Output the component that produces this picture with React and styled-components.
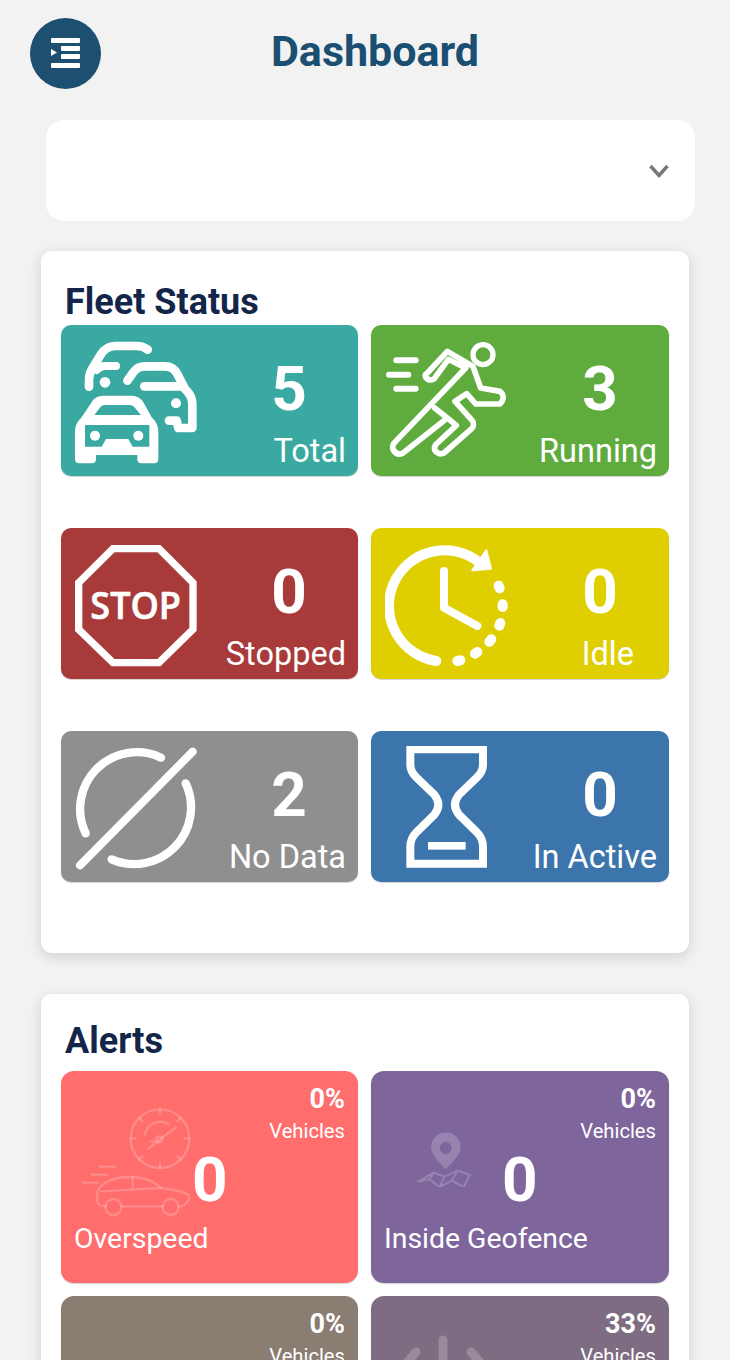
import React from 'react';
import styled, { createGlobalStyle } from 'styled-components';

const Global = createGlobalStyle`
  html, body {
    margin: 0;
    height: 1360px;
    overflow: hidden;
    background: #f2f2f2;
    font-family: Roboto, "Liberation Sans", sans-serif;
  }
`;

const Page = styled.div`
  width: 730px;
  height: 1360px;
  overflow: hidden;
  padding-top: 18px;
  box-sizing: border-box;
`;

const Header = styled.header`
  display: grid;
  grid-template-columns: 101px 1fr 81px;
  align-items: start;
`;

const MenuButton = styled.button`
  width: 71px;
  height: 71px;
  margin-left: 30px;
  padding: 0;
  border: 0;
  border-radius: 50%;
  background: #1c4f70;
  display: flex;
  align-items: center;
  justify-content: center;
`;

const Title = styled.h1`
  margin: 8px 0 0;
  text-align: center;
  color: #1b4f72;
  font-size: 43px;
  line-height: 50px;
  font-weight: 700;
`;

const Select = styled.div`
  width: 649px;
  height: 101px;
  margin: 31px 0 0 46px;
  padding-right: 26px;
  box-sizing: border-box;
  background: #fff;
  border-radius: 18px;
  display: flex;
  align-items: center;
  justify-content: flex-end;
`;

const Card = styled.section`
  width: 648px;
  margin: ${p => p.$top}px 0 0 41px;
  padding: ${p => p.$pad};
  box-sizing: border-box;
  background: #fff;
  border-radius: 11px;
  box-shadow: 0 4px 14px rgba(0, 0, 0, 0.14);
`;

const Heading = styled.h2`
  margin: 0 0 ${p => p.$below || 0}px 4px;
  color: #13264a;
  font-size: 36px;
  line-height: 45px;
  font-weight: 700;
`;

const Grid = styled.div`
  display: grid;
  grid-template-columns: 297px 298px;
  column-gap: 13px;
  row-gap: ${p => p.$gap}px;
`;

const StatusTile = styled.div`
  height: 151px;
  padding: 15px 12px 0 14px;
  box-sizing: border-box;
  background: ${p => p.$bg};
  border-radius: 10px;
  box-shadow: 0 1px 1px rgba(0, 0, 0, 0.18);
  display: flex;
  justify-content: space-between;
  color: #fff;
`;

const StatusText = styled.div`
  display: flex;
  flex-direction: column;
  align-items: flex-end;
`;

const StatusCount = styled.div`
  width: 114px;
  margin-top: 13px;
  text-align: center;
  font-size: 62px;
  line-height: 72px;
  font-weight: 700;
`;

const StatusLabel = styled.div`
  margin: 3px ${p => p.$inset || 0}px 0 0;
  font-size: 32.5px;
  line-height: 46px;
  white-space: nowrap;
`;

const AlertTile = styled.div`
  height: 212px;
  padding: 12px 13px 0;
  box-sizing: border-box;
  background: ${p => p.$bg};
  border-radius: 13px;
  box-shadow: 0 1px 1px rgba(0, 0, 0, 0.18);
  color: #fff;
  display: grid;
  grid-template-columns: 119px 1fr;
  grid-template-rows: 62px 70px auto;
`;

const AlertIcon = styled.div`
  grid-column: 1;
  grid-row: 1 / 3;
  align-self: end;
  justify-self: end;
  display: flex;
  margin-bottom: ${p => p.$lift}px;
  margin-right: ${p => p.$shift}px;
`;

const AlertStat = styled.div`
  grid-column: 2;
  grid-row: 1;
  text-align: right;
`;

const Percent = styled.div`
  font-size: 27px;
  line-height: 32px;
  font-weight: 700;
`;

const Vehicles = styled.div`
  margin-top: 1px;
  font-size: 20.2px;
  line-height: 30px;
`;

const AlertCount = styled.div`
  grid-column: 2;
  grid-row: 2;
  align-self: end;
  margin-left: -1px;
  font-size: 62px;
  line-height: 70px;
  font-weight: 700;
`;

const AlertLabel = styled.div`
  grid-column: 1 / 3;
  grid-row: 3;
  margin-top: 4px;
  font-size: 28.4px;
  line-height: 40px;
  white-space: nowrap;
`;

const Glyph = styled.svg`
  display: block;
  flex: none;
`;

const MenuIcon = () => (
  <Glyph width="30" height="31" viewBox="0 0 30 31" fill="#fff">
    <rect x="0" y="0" width="29" height="5" rx="1" />
    <rect x="10" y="8" width="19" height="5" rx="1" />
    <path d="M0 11 L6 14.5 L0 18 Z" />
    <rect x="10" y="16" width="19" height="5" rx="1" />
    <rect x="0" y="25" width="29" height="5" rx="1" />
  </Glyph>
);

const Chevron = () => (
  <Glyph width="20" height="14" viewBox="0 0 20 14" fill="none" stroke="#777" strokeWidth="3.4">
    <path d="M1.5 2 L10 11.5 L18.5 2" />
  </Glyph>
);

const IconFrame = ({ box, children, ...rest }) => (
  <Glyph width="124" height="124" viewBox={box} fill="none" stroke="#fff" strokeLinecap="round" strokeLinejoin="round" {...rest}>
    {children}
  </Glyph>
);

const CarsIcon = () => (
  <IconFrame box="75 58 372 372">
    <path strokeWidth="26" d="M293 87 Q280 76 262 76 L195 76 Q168 76 152 102 L126 145 Q117 160 117 178 L117 198" />
    <path strokeWidth="24" d="M198 136 L165 136 Q150 136 140 148" />
    <circle cx="165" cy="185" r="16" fill="#fff" stroke="none" />
    <path strokeWidth="26" d="M232 180 L250 155 Q262 137 285 137 L345 137 Q370 137 382 160 L405 205 Q427 225 427 250 L427 322 L385 322 L380 300 L357 300" />
    <path strokeWidth="26" d="M283 197 L400 197" />
    <circle cx="378" cy="248" r="15" fill="#fff" stroke="none" />
    <path
      fill="#fff"
      stroke="none"
      fillRule="evenodd"
      d="M75 330 Q75 310 95 290 L125 245 Q135 225 160 225 L245 225 Q268 225 280 245 L305 290 Q325 310 325 330 L325 415 Q325 428 312 428 L275 428 Q262 428 262 415 L262 403 L138 403 L138 415 Q138 428 125 428 L88 428 Q75 428 75 415 Z M133 283 L273 283 L252 258 Q248 253 238 253 L165 253 Q155 253 152 258 Z M105 313 L105 378 L155 378 L168 355 L235 355 L248 378 L298 378 L298 313 Z"
    />
    <circle cx="135" cy="345" r="15" fill="#fff" stroke="none" />
    <circle cx="265" cy="345" r="15" fill="#fff" stroke="none" />
  </IconFrame>
);

const RunnerIcon = () => (
  <IconFrame box="58 66 372 372">
    <path strokeWidth="18" d="M92 127 L150 127 M70 170 L128 170 M92 212 L150 212" />
    <circle cx="352" cy="110" r="30" strokeWidth="16" />
    <path
      strokeWidth="17"
      d="M185 165 L245 100 L322 145 L345 210 L403 220 Q422 236 403 258 L330 258 L303 227 L268 250 L320 308 Q328 322 318 332 L235 405 Q220 412 208 398 Q203 388 212 378 L272 322 L245 300 L112 405 Q95 415 82 395 Q78 380 90 370 L300 150 L248 124 L205 183 Q190 190 180 178 Q175 170 185 165 Z M207 270 L245 300"
    />
  </IconFrame>
);

const StopIcon = () => (
  <IconFrame box="75 66 372 372">
    <path strokeWidth="22" strokeLinejoin="miter" d="M189 83 L327 83 L429 185 L429 325 L327 425 L189 425 L86 325 L86 185 Z" />
    <text
      x="257"
      y="293"
      fill="#fff"
      stroke="#fff"
      strokeWidth="2"
      textAnchor="middle"
      textLength="272"
      lengthAdjust="spacingAndGlyphs"
      fontFamily="'Open Sans', sans-serif"
      fontWeight="600"
      fontSize="116"
    >
      STOP
    </text>
  </IconFrame>
);

const ClockIcon = () => (
  <IconFrame box="58 66 372 372">
    <path strokeWidth="30" strokeLinecap="round" d="M212 420 A167 167 0 1 1 338 122" />
    <path fill="#fff" stroke="#fff" strokeWidth="6" d="M362 88 L376 143 L320 148 Z" />
    <path strokeWidth="24" d="M235 150 L235 260 L335 315" />
    <path strokeWidth="30" d="M399 194 L402 202 M411 250 L411 258 M404 306 L401 314 M377 355 L371 362 M335 393 L328 398 M284 418 L275 420" />
  </IconFrame>
);

const NoDataIcon = () => (
  <IconFrame box="75 60 372 372">
    <path strokeWidth="25" d="M333 95 A170 170 0 0 0 107 322" />
    <path strokeWidth="25" d="M407 172 A170 170 0 0 1 185 400" />
    <path strokeWidth="24" d="M90 418 L428 77" />
  </IconFrame>
);

const HourglassIcon = () => (
  <IconFrame box="58 66 372 372">
    <path
      strokeWidth="24"
      strokeLinejoin="miter"
      d="M134 76 L352 76 L352 122 Q352 142 334 160 L280 212 Q256 243 280 272 L334 325 Q352 343 352 368 L352 419 L134 419 L134 368 Q134 343 152 325 L206 272 Q230 243 206 212 L152 160 Q134 142 134 122 Z"
    />
    <rect x="187" y="354" width="113" height="23" fill="#fff" stroke="none" />
  </IconFrame>
);

const OverspeedIcon = () => (
  <Glyph width="112" height="112" viewBox="90 132 336 336" fill="none" stroke="#fff" strokeOpacity="0.2" strokeWidth="7" strokeLinecap="round" strokeLinejoin="round">
    <circle cx="327" cy="230" r="88" />
    <path d="M327 142 L327 156 M327 304 L327 318 M239 230 L253 230 M401 230 L415 230 M265 168 L275 178 M389 168 L379 178 M265 292 L275 282 M389 292 L379 282" />
    <path d="M281 218 A48 48 0 0 1 352 186" />
    <path d="M292 260 L375 195 M320 240 L300 238" />
    <circle cx="325" cy="232" r="9" />
    <path d="M146 314 L192 314 M122 338 L168 338 M96 362 L142 362" />
    <path d="M165 433 L150 430 Q138 425 138 410 L140 385 Q165 345 240 345 Q295 345 330 378 Q390 385 415 400 Q415 425 390 433 L382 433 M335 433 L212 433" />
    <path d="M150 388 L330 378 M245 345 L245 385" />
    <circle cx="187" cy="435" r="24" />
    <circle cx="359" cy="435" r="24" />
  </Glyph>
);

const GeofenceIcon = () => (
  <Glyph width="56" height="56" viewBox="158 213 168 168" fill="none">
    <path
      fill="#fff"
      fillOpacity="0.2"
      fillRule="evenodd"
      d="M244 328 Q200 285 200 262 A44.5 44.5 0 0 1 289 262 Q289 285 244 328 Z M244 246 A18 18 0 1 0 244.01 282 A18 18 0 1 0 244 246 Z"
    />
    <path
      stroke="#fff"
      strokeOpacity="0.2"
      strokeWidth="6"
      strokeLinejoin="round"
      d="M162 365 L208 338 L240 350 L280 332 L316 345 L298 381 L262 362 L226 381 L195 358 Z M208 338 L195 358 M240 350 L226 381 M280 332 L262 362"
    />
  </Glyph>
);

const RaysIcon = () => (
  <Glyph width="112" height="112" viewBox="0 0 112 112" fill="none" stroke="#fff" strokeOpacity="0.2" strokeWidth="9" strokeLinecap="round">
    <path d="M52 5 L52 52 M25 17 L9 36 M80 17 L97 36" />
  </Glyph>
);

const statuses = [
  { label: 'Total', count: 5, bg: '#3aa9a2', Icon: CarsIcon },
  { label: 'Running', count: 3, bg: '#5fab3e', Icon: RunnerIcon },
  { label: 'Stopped', count: 0, bg: '#a83a3a', Icon: StopIcon },
  { label: 'Idle', count: 0, bg: '#e0cf00', Icon: ClockIcon, inset: 23 },
  { label: 'No Data', count: 2, bg: '#8f8f8f', Icon: NoDataIcon },
  { label: 'In Active', count: 0, bg: '#3c75ab', Icon: HourglassIcon },
];

const alerts = [
  { label: 'Overspeed', count: 0, percent: '0%', bg: '#ff6d6d', Icon: OverspeedIcon, lift: -3, shift: 0 },
  { label: 'Inside Geofence', count: 0, percent: '0%', bg: '#7e659b', Icon: GeofenceIcon, lift: 28, shift: 30 },
  { percent: '0%', bg: '#8a7d72' },
  { percent: '33%', bg: '#7e6d82', Icon: RaysIcon, lift: -7, shift: 0 },
];

export default function App() {
  return (
    <Page>
      <Global />
      <Header>
        <MenuButton aria-label="Menu">
          <MenuIcon />
        </MenuButton>
        <Title>Dashboard</Title>
      </Header>
      <Select>
        <Chevron />
      </Select>

      <Card $top={30} $pad="29px 20px 71px">
        <Heading>Fleet Status</Heading>
        <Grid $gap={52}>
          {statuses.map(s => (
            <StatusTile key={s.label} $bg={s.bg}>
              <s.Icon />
              <StatusText>
                <StatusCount>{s.count}</StatusCount>
                <StatusLabel $inset={s.inset}>{s.label}</StatusLabel>
              </StatusText>
            </StatusTile>
          ))}
        </Grid>
      </Card>

      <Card $top={41} $pad="25px 20px 30px">
        <Heading $below={7}>Alerts</Heading>
        <Grid $gap={13}>
          {alerts.map((a, i) => (
            <AlertTile key={i} $bg={a.bg}>
              {a.Icon && (
                <AlertIcon $lift={a.lift} $shift={a.shift}>
                  <a.Icon />
                </AlertIcon>
              )}
              <AlertStat>
                <Percent>{a.percent}</Percent>
                <Vehicles>Vehicles</Vehicles>
              </AlertStat>
              {a.label && <AlertCount>{a.count}</AlertCount>}
              {a.label && <AlertLabel>{a.label}</AlertLabel>}
            </AlertTile>
          ))}
        </Grid>
      </Card>
    </Page>
  );
}
